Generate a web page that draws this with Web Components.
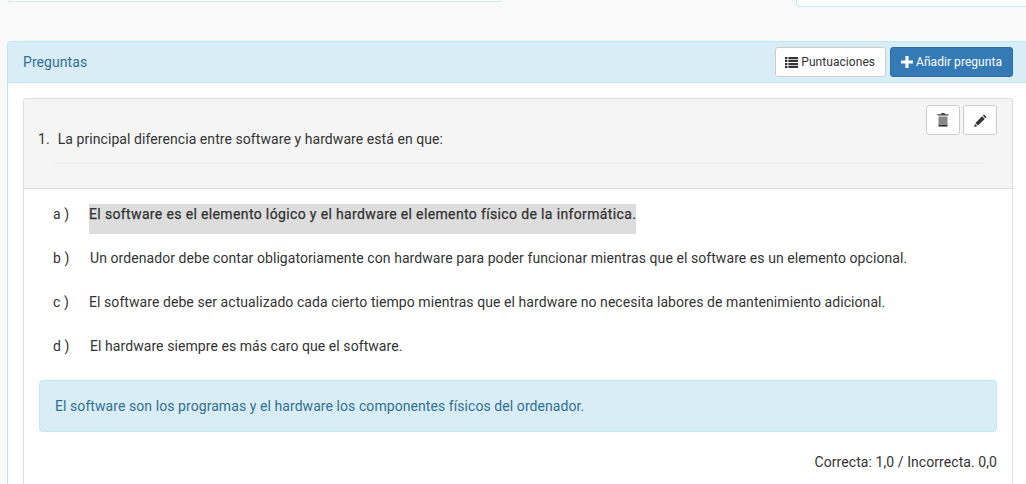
<!DOCTYPE html>
<html>
<head>
<meta charset="utf-8">
<title>Preguntas</title>
<style>
  html, body { margin: 0; height: 484px; overflow: hidden; }
  body { background: #f9f9f9; font: 14px/20px Roboto, "Liberation Sans", sans-serif; letter-spacing: .07px; color: #333; }
</style>
</head>
<body>
<top-strip></top-strip>
<questions-panel title-text="Preguntas">
  <app-button slot="actions" icon="list">Puntuaciones</app-button>
  <app-button slot="actions" icon="plus" primary>Añadir pregunta</app-button>
  <question-card number="1." text="La principal diferencia entre software y hardware está en que:" score="Correcta: 1,0 / Incorrecta. 0,0">
    <question-option letter="a )" correct tight>El software es el elemento lógico y el hardware el elemento físico de la informática.</question-option>
    <question-option letter="b )">Un ordenador debe contar obligatoriamente con hardware para poder funcionar mientras que el software es un elemento opcional.</question-option>
    <question-option letter="c )" tight>El software debe ser actualizado cada cierto tiempo mientras que el hardware no necesita labores de mantenimiento adicional.</question-option>
    <question-option letter="d )">El hardware siempre es más caro que el software.</question-option>
    <span slot="note">El software son los programas y el hardware los componentes físicos del ordenador.</span>
  </question-card>
</questions-panel>

<script>
const ICONS = {
  list: '<svg width="13" height="11" viewBox="0 0 13 11"><path fill="#333" d="M0 0h2.4v2.2H0zM3.4 0H13v2.2H3.4zM0 2.9h2.4v2.2H0zM3.4 2.9H13v2.2H3.4zM0 5.9h2.4v2.2H0zM3.4 5.9H13v2.2H3.4zM0 8.8h2.4V11H0zM3.4 8.8H13V11H3.4z"/></svg>',
  plus: '<svg width="12" height="12" viewBox="0 0 12 12"><path fill="#fff" d="M4.4 0h3.2v4.4H12v3.2H7.6V12H4.4V7.6H0V4.4h4.4z"/></svg>',
  trash: '<svg width="12" height="14" viewBox="0 0 12 14"><path fill="#444" d="M4.2 0h3.6v1.2h3.7v1.3H.5V1.2h3.7z"/><path fill="#888" d="M1.5 3.5h9V12h-9z"/><path fill="#333" d="M1.5 12h9v1.6h-9z"/></svg>',
  pencil: '<svg width="13" height="13" viewBox="0 0 13 13"><path fill="#333" d="M10 .4l2.6 2.6-1.2 1.2-2.6-2.6zM8.1 2.3l2.6 2.6-6.7 6.7-2.6-2.6zM.8 9.7l2.5 2.5-3 .8z"/></svg>'
}

class TopStrip extends HTMLElement {
  constructor() {
    super()
    this.attachShadow({ mode: 'open' }).innerHTML = `
      <style>
        :host { display: flex; justify-content: space-between; align-items: flex-start; height: 41px; padding-left: 8px; }
        .left { width: 492px; height: 1px; background: #fff; border: 1px solid #dcdcdc; border-top: 0; border-bottom-color: #d4e6ec; border-radius: 0 0 4px 4px; }
        .right { width: 229px; height: 6px; background: #fff; border: 1px solid #bce8f1; border-top: 0; border-right: 0; border-radius: 0 0 0 4px; }
      </style>
      <div class="left"></div>
      <div class="right"></div>`
  }
}

class AppButton extends HTMLElement {
  constructor() {
    super()
    this.attachShadow({ mode: 'open' }).innerHTML = `
      <style>
        :host { display: inline-flex; align-items: center; gap: 3px; height: 28px; padding: 0 10px 0 9px; font-size: 12px; line-height: 18px; letter-spacing: .05px; color: #333; background: #fff; border: 1px solid #ccc; border-radius: 3px; }
        :host([primary]) { padding-left: 10px; color: #fff; background: #337ab7; border-color: #2e6da4; }
        span { display: flex; }
      </style>
      <span id="icon"></span><slot></slot>`
  }
  connectedCallback() {
    this.shadowRoot.getElementById('icon').innerHTML = ICONS[this.getAttribute('icon')]
  }
}

class IconButton extends HTMLElement {
  constructor() {
    super()
    this.attachShadow({ mode: 'open' }).innerHTML = `
      <style>
        :host { display: flex; align-items: center; justify-content: center; width: 32px; height: 28px; background: #fff; border: 1px solid #ccc; border-radius: 3px; }
        span { display: flex; }
      </style>
      <span id="icon"></span>`
  }
  connectedCallback() {
    this.shadowRoot.getElementById('icon').innerHTML = ICONS[this.getAttribute('icon')]
  }
}

class QuestionsPanel extends HTMLElement {
  constructor() {
    super()
    this.attachShadow({ mode: 'open' }).innerHTML = `
      <style>
        :host { display: block; width: 1020px; margin-left: 7px; background: #fff; border: 1px solid #bce8f1; border-bottom: 0; border-right: 0; border-radius: 4px 0 0 0; }
        header { display: flex; justify-content: space-between; align-items: center; height: 40px; padding: 0 15px; background: #d9edf7; border-bottom: 1px solid #bce8f1; color: #31708f; }
        .actions { display: flex; gap: 4px; }
        .body { padding: 15px 15px 0; }
      </style>
      <header><span id="title"></span><div class="actions"><slot name="actions"></slot></div></header>
      <div class="body"><slot></slot></div>`
  }
  connectedCallback() {
    this.shadowRoot.getElementById('title').textContent = this.getAttribute('title-text')
  }
}

class QuestionCard extends HTMLElement {
  constructor() {
    super()
    this.attachShadow({ mode: 'open' }).innerHTML = `
      <style>
        :host { display: block; border: 1px solid #ddd; border-bottom: 0; border-radius: 4px 4px 0 0; background: #fff; }
        .head { position: relative; height: 90px; padding: 30px 15px 0 14px; box-sizing: border-box; background: #f5f5f5; border-bottom: 1px solid #ddd; border-radius: 3px 3px 0 0; }
        .tools { position: absolute; top: 6px; right: 15px; display: flex; gap: 3px; }
        .line { display: flex; gap: 8px; }
        hr { margin: 14px 12px 0 16px; height: 0; border: 0; border-top: 1px solid #eee; }
        .options { display: flex; flex-direction: column; gap: 14px; padding: 15px 15px 0 29px; }
        .note { margin: 14px 15px 0; padding: 15px; height: 20px; background: #d9edf7; border: 1px solid #bce8f1; border-radius: 4px; color: #31708f; }
        .score { padding: 20px 15px 12px; text-align: right; }
      </style>
      <div class="head">
        <div class="tools"><icon-button icon="trash"></icon-button><icon-button icon="pencil"></icon-button></div>
        <div class="line"><span id="num"></span><span id="text"></span></div>
        <hr>
      </div>
      <div class="options"><slot></slot></div>
      <div class="note"><slot name="note"></slot></div>
      <div class="score" id="score"></div>`
  }
  connectedCallback() {
    this.shadowRoot.getElementById('num').textContent = this.getAttribute('number')
    this.shadowRoot.getElementById('text').textContent = this.getAttribute('text')
    this.shadowRoot.getElementById('score').textContent = this.getAttribute('score')
  }
}

class QuestionOption extends HTMLElement {
  constructor() {
    super()
    this.attachShadow({ mode: 'open' }).innerHTML = `
      <style>
        :host { display: flex; align-items: flex-start; }
        .letter { width: 37px; flex: none; }
        :host([tight]) .letter { width: 36px; }
        .text { display: block; padding-bottom: 10px; }
        :host([correct]) .text { background: #ddd; letter-spacing: .36px; -webkit-text-stroke: .25px #333; }
      </style>
      <span class="letter" id="letter"></span><span class="text"><slot></slot></span>`
  }
  connectedCallback() {
    this.shadowRoot.getElementById('letter').textContent = this.getAttribute('letter')
  }
}

customElements.define('top-strip', TopStrip)
customElements.define('app-button', AppButton)
customElements.define('icon-button', IconButton)
customElements.define('questions-panel', QuestionsPanel)
customElements.define('question-card', QuestionCard)
customElements.define('question-option', QuestionOption)
</script>
</body>
</html>
